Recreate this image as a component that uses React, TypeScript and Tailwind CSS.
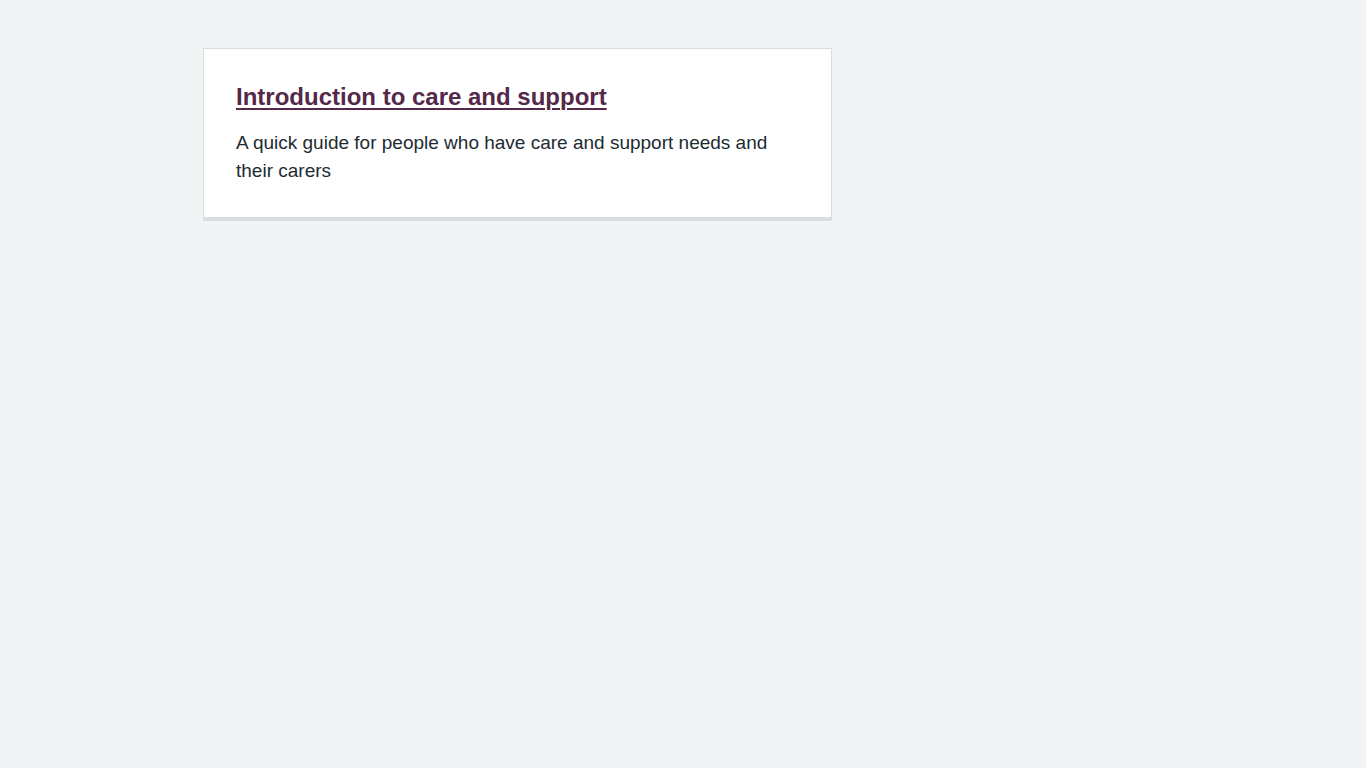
export default function App() {
  return (
    <div className="min-h-[768px] w-full bg-[#f0f4f5] font-['Liberation_Sans',Arial,sans-serif]">
      <div className="mx-auto w-[960px] pt-12">
        <div className="w-[629px] border border-[#d8dde0] border-b-4 bg-white p-8">
          <h2 className="mb-4 text-[24px] font-bold leading-[32px]">
            <a href="#" className="text-[#542848] underline decoration-[2px] underline-offset-[3px]">
              Introduction to care and support
            </a>
          </h2>
          <p className="text-[19px] leading-[28px] text-[#212b32]">
            A quick guide for people who have care and support needs and their carers
          </p>
        </div>
      </div>
    </div>
  );
}
